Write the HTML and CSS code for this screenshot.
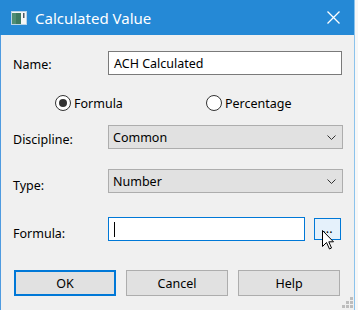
FILE: index.html
```html
<!DOCTYPE html>
<html>
<head>
<meta charset="utf-8">
<link rel="stylesheet" href="styles.css">
</head>
<body>
<div class="window">
  <div class="titlebar">
    <svg class="app-icon" width="16" height="14" viewBox="0 0 16 14">
      <rect x="0.5" y="0.5" width="15" height="13" fill="#f4f6f6" stroke="#b9d3e6"/>
      <rect x="1" y="2" width="9" height="11" fill="#3d7a62"/>
      <rect x="1" y="2" width="4" height="11" fill="#4f8e74"/>
      <rect x="12" y="2" width="1.5" height="5" fill="#4a5a66"/>
    </svg>
    <span class="title">Calculated Value</span>
    <svg class="close" width="13" height="13" viewBox="0 0 13 13">
      <path d="M0.5 0.5 L12.5 12.5 M12.5 0.5 L0.5 12.5" stroke="#fff" stroke-width="1.3" fill="none"/>
    </svg>
  </div>
  <div class="content">
    <div class="row row-name">
      <span class="label label-name">Name:</span>
      <div class="textbox">ACH Calculated</div>
    </div>
    <div class="radios">
      <div class="radio radio-first"><span class="dot checked"></span><span>Formula</span></div>
      <div class="radio"><span class="dot"></span><span>Percentage</span></div>
    </div>
    <div class="row row-discipline">
      <span class="label label-discipline">Discipline:</span>
      <div class="combo">
        <span>Common</span>
        <svg class="chev" width="9" height="5" viewBox="0 0 9 5"><path d="M0.5 0.5 L4.5 4.5 L8.5 0.5" stroke="#333" fill="none"/></svg>
      </div>
    </div>
    <div class="row row-type">
      <span class="label label-low">Type:</span>
      <div class="combo">
        <span>Number</span>
        <svg class="chev" width="9" height="5" viewBox="0 0 9 5"><path d="M0.5 0.5 L4.5 4.5 L8.5 0.5" stroke="#333" fill="none"/></svg>
      </div>
    </div>
    <div class="row row-formula">
      <span class="label label-low">Formula:</span>
      <div class="textbox focused"><span class="caret"></span></div>
      <div class="dots-btn">...</div>
    </div>
    <div class="buttons">
      <div class="btn default">OK</div>
      <div class="btn">Cancel</div>
      <div class="btn">Help</div>
    </div>
    <svg class="grip" width="12" height="12" viewBox="0 0 12 12">
      <rect x="8" y="0" width="3" height="3" fill="#bdbdbd"/>
      <rect x="4" y="4" width="3" height="3" fill="#bdbdbd"/>
      <rect x="8" y="4" width="3" height="3" fill="#bdbdbd"/>
      <rect x="0" y="8" width="3" height="3" fill="#bdbdbd"/>
      <rect x="4" y="8" width="3" height="3" fill="#bdbdbd"/>
      <rect x="8" y="8" width="3" height="3" fill="#bdbdbd"/>
    </svg>
  </div>
  <svg class="cursor" width="13" height="20" viewBox="0 0 13 20">
    <path d="M0.5 0.5 V16.5 L4.5 12.5 L7.5 19 L9.5 18 L6.8 11.8 H11.5 Z" fill="#fff" stroke="#000" stroke-width="1" stroke-linejoin="miter"/>
  </svg>
</div>
</body>
</html>
```
FILE: styles.css
```css
html, body {
  margin: 0;
  padding: 0;
  background: #f7f7f7;
  width: 358px;
  height: 310px;
  overflow: hidden;
}

.window {
  position: relative;
  width: 353px;
  height: 310px;
  border-left: 1px solid #4f9be0;
  border-right: 1px solid #8cc3ec;
  background: #f0f0f0;
  font-family: "Segoe UI", "Noto Sans", sans-serif;
  font-size: 12.5px;
  color: #000;
}

.titlebar {
  height: 35px;
  background: #2589d6;
  display: flex;
  align-items: center;
  color: #fff;
  margin-left: -1px;
  padding-left: 11px;
}

.app-icon {
  display: block;
  margin-top: 1px;
}

.title {
  margin-left: 8px;
  font-size: 15px;
  flex: 1;
}

.close {
  display: block;
  margin-right: 14px;
}

.content {
  position: relative;
  padding: 16px 11px 0 12px;
  height: 259px;
}

.row {
  display: flex;
  align-items: center;
  height: 24px;
}

.label {
  width: 95px;
  line-height: 17px;
}

.label-name {
  padding-top: 2px;
}

.label-discipline {
  padding-top: 5px;
}

.label-low {
  padding-top: 8px;
}

.textbox {
  width: 227px;
  height: 22px;
  border: 1px solid #7a7a7a;
  background: #fff;
  padding: 0 0 0 5px;
  display: flex;
  align-items: center;
}

.textbox.focused {
  width: 190px;
  border-color: #0078d7;
}

.caret {
  width: 1px;
  height: 15px;
  background: #000;
}

.radios {
  display: flex;
  margin: 20px 0 0 42px;
  height: 16px;
  align-items: center;
}

.radio {
  display: flex;
  align-items: center;
  gap: 3px;
}

.radio-first {
  width: 151px;
}

.dot {
  box-sizing: border-box;
  width: 16px;
  height: 16px;
  border: 1px solid #333;
  border-radius: 50%;
  background: #fff;
  position: relative;
}

.dot.checked::after {
  content: "";
  position: absolute;
  left: 3px;
  top: 3px;
  width: 8px;
  height: 8px;
  border-radius: 50%;
  background: #333;
}

.combo {
  box-sizing: border-box;
  width: 235px;
  height: 24px;
  border: 1px solid #adadad;
  background: #e1e1e1;
  display: flex;
  align-items: center;
  justify-content: space-between;
  padding: 0 6px 0 4px;
}

.chev {
  display: block;
}

.row-discipline {
  margin-top: 14px;
}

.row-type {
  margin-top: 20px;
}

.row-formula {
  margin-top: 24px;
}

.dots-btn {
  box-sizing: border-box;
  width: 27px;
  height: 22px;
  margin-left: 9px;
  border: 1px solid #0078d7;
  background: #e5f1fb;
  text-align: center;
  line-height: 19px;
  font-size: 12.5px;
}

.buttons {
  display: flex;
  gap: 10px;
  margin: 29px 0 0 1px;
}

.btn {
  box-sizing: border-box;
  width: 102px;
  height: 26px;
  border: 1px solid #adadad;
  background: #e1e1e1;
  display: flex;
  align-items: center;
  justify-content: center;
}

.btn.default {
  border: 2px solid #0078d7;
}

.grip {
  position: absolute;
  right: 0;
  bottom: 1px;
}

.cursor {
  position: absolute;
  left: 321px;
  top: 230px;
}
```
